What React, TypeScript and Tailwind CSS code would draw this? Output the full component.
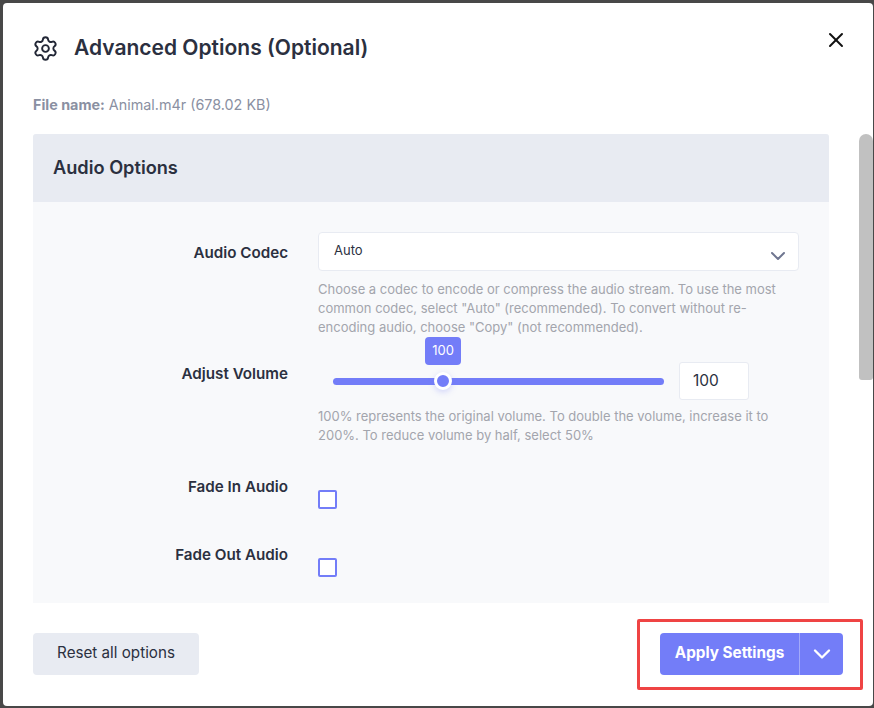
import React from "react";
import { Settings, X, ChevronDown } from "lucide-react";

function Label({ children, className = "" }: { children: React.ReactNode; className?: string }) {
  return (
    <div className={`w-[255px] shrink-0 text-right text-[15.2px] leading-[20px] font-semibold text-[#2b3040] ${className}`}>
      {children}
    </div>
  );
}

function Help({ children }: { children: React.ReactNode }) {
  return <p className="text-[13px] leading-[19px] text-[#a3a5ad]">{children}</p>;
}

export default function App() {
  return (
    <div className="w-[874px] h-[708px] bg-[#484848] pt-[3px] pl-[3px] pr-[1px] pb-[2px] font-['Inter',sans-serif] overflow-hidden">
      <div className="relative w-full h-full bg-white rounded-[4px] flex flex-col">
        <header className="h-[131px] shrink-0 pl-[30px] pr-[25px] flex flex-col">
          <div className="flex items-center justify-between pt-[32px]">
            <div className="flex items-center gap-[15px]">
              <Settings size={27} strokeWidth={1.7} className="text-[#222736] -ml-[1px]" />
              <h1 className="text-[21px] leading-[26px] font-semibold text-[#2b3040] -mt-[1px]">Advanced Options (Optional)</h1>
            </div>
            <X size={24} strokeWidth={2} className="text-[#111] -mt-[18px]" />
          </div>
          <div className="mt-[34px] text-[14.35px] leading-[18px] text-[#8a90a2]">
            <span className="font-bold">File name:</span> Animal.m4r (678.02 KB)
          </div>
        </header>

        <div className="flex-1 min-h-0 flex pl-[30px]">
          <section className="w-[796px] h-[469px] rounded-t-[3px] bg-[#f8f9fb] overflow-hidden flex flex-col">
            <div className="h-[68px] shrink-0 bg-[#e8ebf2] pl-[20px] flex items-center">
              <h2 className="text-[18.2px] font-semibold text-[#2b3040] -mt-[1px]">Audio Options</h2>
            </div>
            <div className="flex-1 flex flex-col pr-[30px]">
              <div className="flex mt-[30px] gap-[30px]">
                <Label className="pt-[11px]">Audio Codec</Label>
                <div className="flex-1">
                  <div className="h-[39px] bg-white border border-[#e8ebf2] rounded-[4px] pl-[15px] pr-[8px] flex items-center justify-between">
                    <span className="text-[13px] text-[#2b3040] -mt-[2px]">Auto</span>
                    <ChevronDown size={24} strokeWidth={2} className="text-[#6f7690] mt-[8px]" />
                  </div>
                  <div className="mt-[9px]">
                    <Help>
                      Choose a codec to encode or compress the audio stream. To use the most common codec, select "Auto" (recommended). To convert without re-encoding audio, choose "Copy" (not recommended).
                    </Help>
                  </div>
                </div>
              </div>

              <div className="flex gap-[30px] mt-[25px]">
                <Label className="pt-[2px]">Adjust Volume</Label>
                <div className="flex-1">
                  <div className="flex items-center">
                    <div className="relative ml-[15px] w-[331px] h-[7px] rounded-full bg-[#737df8]">
                      <div className="absolute left-[101px] -top-[5.5px] w-[18px] h-[18px] rounded-full bg-[#737df8] border-[3.5px] border-white shadow-[0_2px_6px_rgba(115,125,248,0.3)]" />
                      <div className="absolute left-[92px] -top-[41px] w-[36px] h-[28px] rounded-[4px] bg-[#737df8] text-white text-[13px] flex items-center justify-center">100</div>
                    </div>
                    <div className="ml-[15px] w-[70px] h-[38px] bg-white border border-[#e8ebf2] rounded-[3px] pl-[13px] flex items-center text-[15.5px] text-[#2b3040]">100</div>
                  </div>
                  <div className="mt-[7px]">
                    <Help>
                      100% represents the original volume. To double the volume, increase it to 200%. To reduce volume by half, select 50%
                    </Help>
                  </div>
                </div>
              </div>

              <div className="flex gap-[30px] mt-[32px]">
                <Label>Fade In Audio</Label>
                <div className="mt-[13px] w-[19px] h-[19px] border-2 border-[#737df8] rounded-[2px] bg-white" />
              </div>
              <div className="flex gap-[30px] mt-[36px]">
                <Label>Fade Out Audio</Label>
                <div className="mt-[13px] w-[19px] h-[19px] border-2 border-[#737df8] rounded-[2px] bg-white" />
              </div>
            </div>
          </section>
          <div className="ml-[30px] w-[14px] h-[246px] bg-[#c1c1c1] rounded-t-[7px] rounded-b-[3px]" />
        </div>

        <footer className="h-[103px] shrink-0 pl-[30px] pr-[30px] pt-[30px] flex items-start justify-between">
          <button className="w-[166px] h-[42px] rounded-[4px] bg-[#e8ebf2] text-[15.2px] text-[#2b3040] pb-[2px]">Reset all options</button>
          <div className="w-[183px] h-[42px] rounded-[4px] bg-[#737df8] text-white flex items-stretch">
            <span className="w-[140px] flex items-center justify-center text-[15.3px] font-bold pb-[2px] border-r border-[#a3aafa]">Apply Settings</span>
            <span className="flex-1 flex items-center justify-center">
              <ChevronDown size={28} strokeWidth={2} />
            </span>
          </div>
        </footer>

        <div className="absolute left-[634px] top-[616px] w-[226px] h-[71px] border-[3px] border-[#ef4444] rounded-[2px] pointer-events-none" />
      </div>
    </div>
  );
}
